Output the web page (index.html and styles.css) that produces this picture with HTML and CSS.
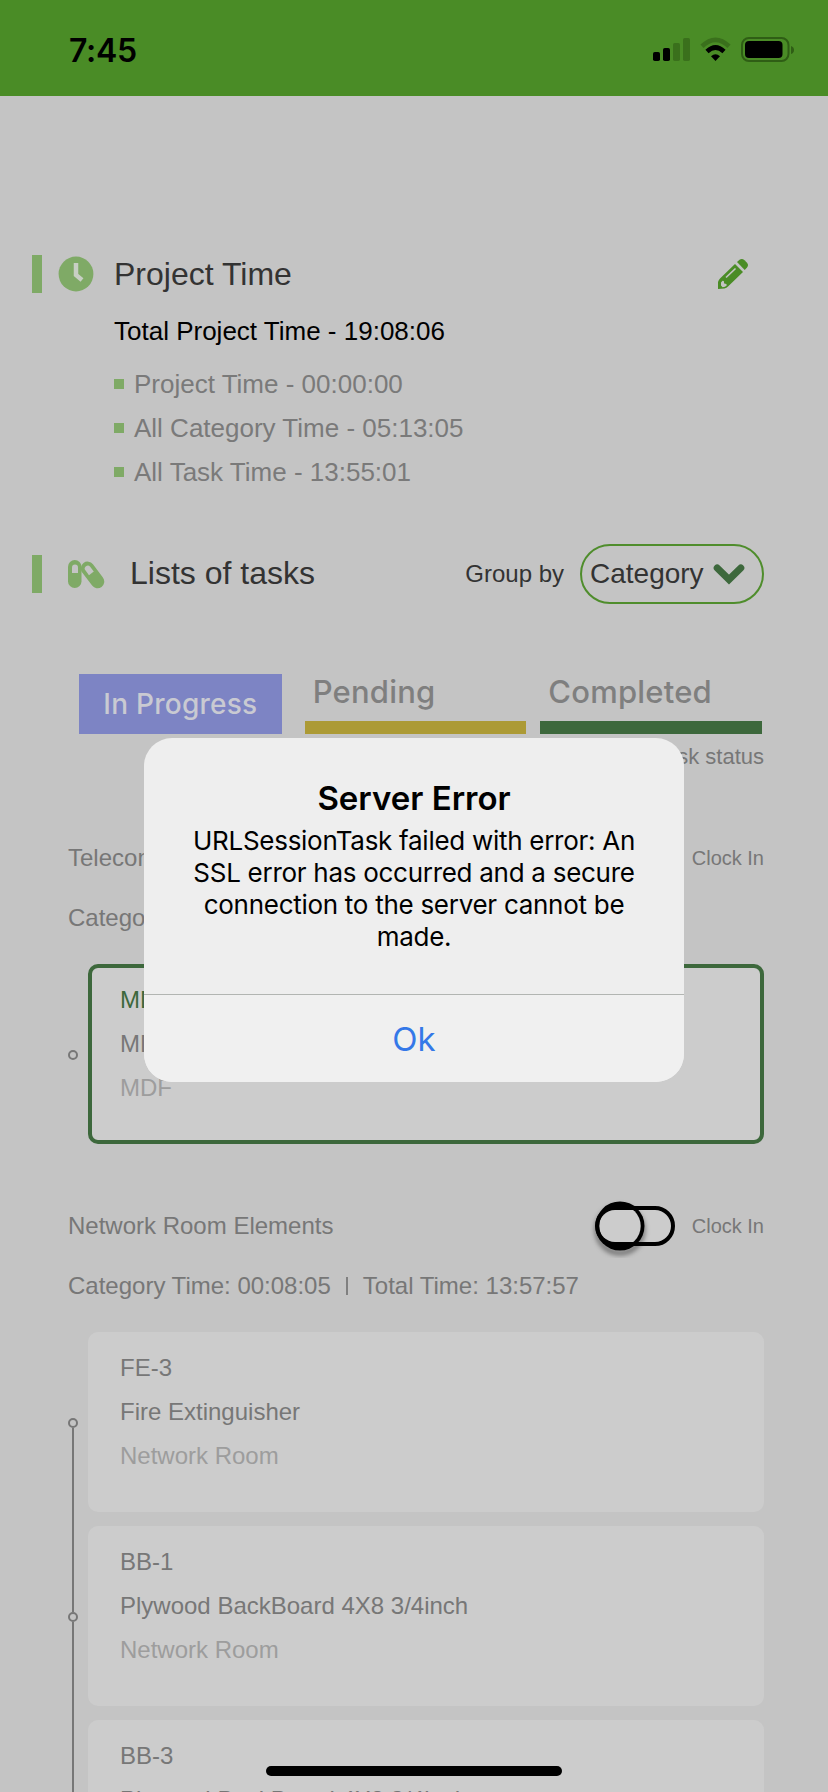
FILE: index.html
```html
<!DOCTYPE html>
<html lang="en">
<head>
<meta charset="utf-8">
<title>Project Time</title>
<link rel="stylesheet" href="styles.css">
</head>
<body>
<div class="screen">
  <header class="status-bar">
    <span class="clock">7:45</span>
    <svg class="status-icons" width="142" height="26" viewBox="0 0 142 26">
      <rect x="0" y="15" width="7" height="9" rx="1.8"/>
      <rect x="10" y="11" width="7" height="13" rx="1.8"/>
      <rect x="20" y="6" width="7" height="18" rx="1.8" fill="#3a701c"/>
      <rect x="30" y="1" width="7" height="23" rx="1.8" fill="#3a701c"/>
      <path d="M49 9.2Q62.500 -3.500 76 9.200" fill="none" stroke="#3a701c" stroke-width="4.600"/>
      <path d="M54 14.500Q62.500 6.500 71 14.500" fill="none" stroke="#000" stroke-width="4.600"/>
      <path d="M58 19.200Q62.500 15.500 67 19.200L62.500 24Z"/>
      <rect x="89" y="1" width="46.500" height="23" rx="7" fill="none" stroke="#2f5e15" stroke-width="2"/>
      <rect x="92" y="4" width="37.500" height="17" rx="4"/>
      <path d="M138 9q3 1 3 4t-3 4z" fill="#2f5e15"/>
    </svg>
  </header>

  <main class="content">
    <section class="section-head time-head">
      <span class="marker"></span>
      <svg class="clock-icon" width="36" height="36" viewBox="0 0 36 36">
        <circle cx="18" cy="18" r="17.400" fill="#7faa66"/>
        <path d="M18 7V19L24 24" fill="none" stroke="#c8cfc4" stroke-width="4.500"/>
      </svg>
      <h1 class="title">Project Time</h1>
      <svg class="pencil" width="32" height="32" viewBox="0 0 32 32">
        <g fill="#4a8c26">
          <path d="M1 31V24Q1.500 22 3 20.500L18 6L26 14L11 28.500Q9.500 30 7.500 30.400Z"/>
          <path d="M20 4L22.500 1.800Q25 0 27.500 2.200L30 4.700Q32 7 30 9.500L27.700 12Z"/>
        </g>
        <path d="M9 19.500L18.500 10.500" stroke="#c4c4c4" stroke-width="1.700"/>
        <path d="M4 24.500l1.500-1.700 1.300.3.400 2.400 2.200.4.300 1.500-1.700 1.400-2.400.4-1.600-1.800z" fill="#c4c4c4"/>
      </svg>
    </section>
    <div class="times">
      <p class="total">Total Project Time - 19:08:06</p>
      <ul class="time-list">
        <li class="time-item">Project Time - 00:00:00</li>
        <li class="time-item">All Category Time - 05:13:05</li>
        <li class="time-item">All Task Time - 13:55:01</li>
      </ul>
    </div>

    <section class="section-head tasks-head">
      <span class="marker"></span>
      <svg class="pills-icon" width="38" height="30" viewBox="0 0 38 30">
        <rect x="1" y="1" width="13.500" height="28" rx="6.750" fill="#7faa66"/>
        <path d="M5 14V8.500a3 3 0 0 1 6 0V14z" fill="#c4c4c4"/>
        <g transform="rotate(-37 25.500 16)">
          <rect x="18.800" y="1" width="13.500" height="30" rx="6.750" fill="#7faa66"/>
          <path d="M22.600 14V8a3 3 0 0 1 6 0V14z" fill="#c4c4c4"/>
        </g>
      </svg>
      <h2 class="title">Lists of tasks</h2>
      <span class="group-label">Group by</span>
      <div class="select">
        <span class="select-text">Category</span>
        <svg width="32" height="24" viewBox="0 0 32 24"><path d="M4.200 6L16 17.500L27.800 6" fill="none" stroke="#3d683c" stroke-width="7" stroke-linecap="round" stroke-linejoin="miter"/></svg>
      </div>
    </section>

    <nav class="tabs">
      <div class="tab active">In Progress</div>
      <div class="tab pending">Pending</div>
      <div class="tab completed">Completed</div>
    </nav>
    <p class="status-note">Task status</p>

    <section class="category">
      <div class="category-row">
        <span>Telecom</span>
        <span class="clock-in">Clock In</span>
      </div>
      <p class="category-time">Category Time:</p>
      <div class="task">
        <div class="rail single"><i class="node"></i></div>
        <div class="card selected">
          <p class="code">MDF</p>
          <p>MDF</p>
          <p class="room">MDF</p>
        </div>
      </div>
    </section>

    <section class="category next">
      <div class="category-row">
        <span>Network Room Elements</span>
        <svg class="toggle" width="90" height="64" viewBox="0 0 90 64">
          <defs>
            <filter id="soft" x="-30%" y="-30%" width="160%" height="170%"><feGaussianBlur stdDeviation="2.500"/></filter>
            <clipPath id="track-inner"><rect x="9" y="16" width="72" height="32" rx="16"/></clipPath>
          </defs>
          <rect x="7" y="14" width="76" height="36" rx="18" fill="#ccc"/>
          <circle cx="30" cy="36" r="23" fill="none" stroke="#000" stroke-opacity=".5" stroke-width="4" filter="url(#soft)"/>
          <rect x="7" y="14" width="76" height="36" rx="18" fill="none" stroke="#000" stroke-width="4"/>
          <circle cx="30" cy="32" r="24.500"/>
          <circle cx="30" cy="32" r="20.700" fill="#ccc" clip-path="url(#track-inner)"/>
        </svg>
        <span class="clock-in">Clock In</span>
      </div>
      <p class="category-time"><span>Category Time: 00:08:05</span><i class="divider"></i><span>Total Time: 13:57:57</span></p>
      <div class="task">
        <div class="rail first"><i class="node"></i></div>
        <div class="card">
          <p>FE-3</p>
          <p>Fire Extinguisher</p>
          <p class="room">Network Room</p>
        </div>
      </div>
      <div class="task">
        <div class="rail"><i class="node"></i></div>
        <div class="card">
          <p>BB-1</p>
          <p>Plywood BackBoard 4X8 3/4inch</p>
          <p class="room">Network Room</p>
        </div>
      </div>
      <div class="task">
        <div class="rail"><i class="node"></i></div>
        <div class="card">
          <p>BB-3</p>
          <p>Plywood BackBoard 4X8 3/4inch</p>
          <p class="room">Network Room</p>
        </div>
      </div>
    </section>
  </main>

  <div class="alert" role="alertdialog">
    <div class="alert-body">
      <h3 class="alert-title">Server Error</h3>
      <p class="alert-text">URLSessionTask failed with error: An<br>SSL error has occurred and a secure<br>connection to the server cannot be<br>made.</p>
    </div>
    <div class="alert-action">Ok</div>
  </div>
  <div class="home-indicator"></div>
</div>
</body>
</html>
```
FILE: styles.css
```css
* { box-sizing: border-box; margin: 0; padding: 0; }
body { background: #c4c4c4; font-family: "Liberation Sans", Arial, sans-serif; }
.screen { position: relative; width: 828px; height: 1792px; overflow: hidden; background: #c4c4c4; color: #777; }
svg { display: block; flex: none; }

.status-bar { display: flex; justify-content: space-between; height: 96px; padding: 37px 33px 0 69px; background: #4a8c26; }
.clock { font: 600 32px/28px Inter, sans-serif; color: #000; letter-spacing: -0.3px; }

.content { padding: 159px 64px 0 32px; }
.section-head { display: flex; align-items: center; color: #333; }
.time-head { height: 38px; }
.tasks-head { height: 60px; margin-top: 50px; }
.marker { width: 10px; height: 38px; background: #7faa66; }
.title { font-size: 32px; font-weight: 400; line-height: 38px; white-space: nowrap; }
.clock-icon { margin: 0 20px 0 16px; }
.pencil { margin: 0 15px 0 auto; }
.pills-icon { margin: 0 25px 0 25px; }
.tasks-head .title { padding-bottom: 2px; }
.group-label { margin: 0 16px 0 auto; font-size: 24px; line-height: 30px; }
.select { display: flex; align-items: center; justify-content: space-between; width: 184px; height: 60px; padding: 0 17px 0 8px; border: 2px solid #4f8d2c; border-radius: 30px; font-size: 28px; }

.times { padding-left: 82px; margin-top: 16px; font-size: 26px; line-height: 44px; }
.total { color: #000; }
.time-list { list-style: none; margin-top: 9px; }
.time-item { display: flex; align-items: center; gap: 10px; color: #7a7a7a; }
.time-item::before { content: ""; width: 10px; height: 10px; background: #7faa66; }

.tabs { display: flex; height: 60px; margin: 70px 2px 0 47px; font-family: Inter, sans-serif; font-weight: 500; color: #7f7f7f; }
.tab { width: 222px; padding-left: 8px; border-bottom: 13px solid; font-size: 31px; line-height: 35px; letter-spacing: 0.2px; }
.tab.active { width: 203px; margin-right: 23px; padding: 0; border: 0; background: #7d84c4; color: #c9cad2; font-size: 28px; line-height: 61px; letter-spacing: 0.25px; text-align: center; }
.tab.pending { margin-right: 14px; border-color: #ac9a35; }
.tab.completed { border-color: #3d683c; }
.status-note { margin-top: 8px; font-size: 22px; line-height: 30px; text-align: right; }

.category { padding-left: 36px; margin-top: 62px; font-size: 24px; }
.category.next { margin-top: 44px; }
.category-row { display: flex; align-items: center; height: 48px; line-height: 48px; }
.clock-in { margin-left: auto; font-size: 20px; }
.toggle { margin-left: auto; }
.toggle + .clock-in { margin-left: 12px; }
.category-time { display: flex; align-items: center; margin: 21px 0 31px; line-height: 30px; }
.divider { width: 2px; height: 18px; margin: 0 15px; background: #808080; }

.task { display: flex; gap: 10px; height: 194px; }
.rail { display: flex; flex-direction: column; align-items: center; width: 10px; }
.rail::before { content: ""; width: 2px; height: 86px; background: #777; }
.rail::after { content: ""; width: 2px; flex: 1; background: #777; }
.rail.first::before, .rail.single::before, .rail.single::after { background: none; }
.node { width: 10px; height: 10px; border: 2px solid #777; border-radius: 50%; }
.card { flex: 1; height: 180px; padding: 14px 32px; border-radius: 10px; background: #ccc; line-height: 44px; }
.card.selected { padding: 10px 28px; border: 4px solid #3d683c; }
.code { color: #3d683c; }
.room { color: #9d9d9d; }

.alert { position: absolute; left: 144px; top: 738px; width: 540px; height: 344px; border-radius: 28px; overflow: hidden; background: #eee; text-align: center; font-family: Inter, sans-serif; color: #000; }
.alert-body { height: 257px; padding-top: 40px; border-bottom: 1px solid #b2b5b2; }
.alert-title { font-size: 33px; font-weight: 600; line-height: 40px; }
.alert-text { margin-top: 7px; font-size: 26px; line-height: 32px; letter-spacing: -0.28px; white-space: nowrap; }
.alert-action { height: 87px; background: #f0f0f0; color: #3478e8; font-size: 33px; line-height: 89px; }
.home-indicator { position: absolute; left: 266px; top: 1766px; width: 296px; height: 10px; border-radius: 5px; background: #000; }
```
